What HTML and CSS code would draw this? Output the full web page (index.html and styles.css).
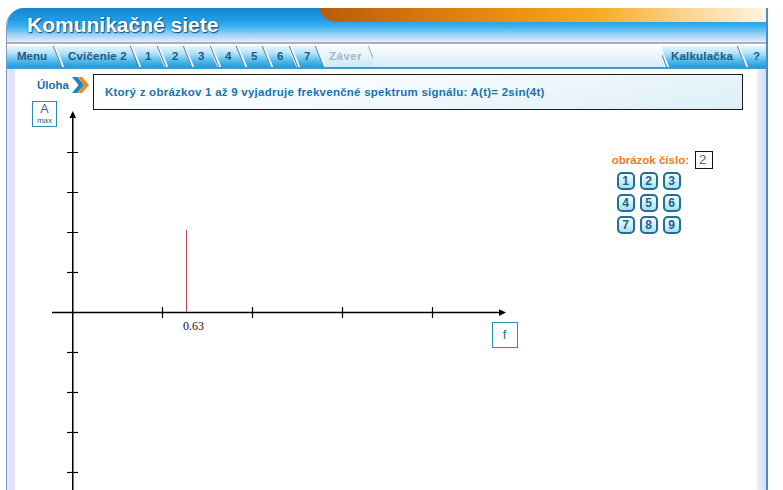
FILE: index.html
```html
<!DOCTYPE html>
<html lang="sk">
<head>
<meta charset="utf-8">
<title>Komunikačné siete</title>
<link rel="stylesheet" href="styles.css">
</head>
<body>
<div class="window">
  <header class="titlebar">
    <h1 class="title">Komunikačné siete</h1>
    <div class="accent"></div>
  </header>
  <nav class="tabbar">
    <div class="tabs">
      <a class="tab tab-first"><span>Menu</span></a>
      <a class="tab tab-wide"><span>Cvičenie 2</span></a>
      <a class="tab"><span>1</span></a>
      <a class="tab"><span>2</span></a>
      <a class="tab"><span>3</span></a>
      <a class="tab"><span>4</span></a>
      <a class="tab"><span>5</span></a>
      <a class="tab"><span>6</span></a>
      <a class="tab"><span>7</span></a>
      <a class="tab tab-off"><span>Záver</span></a>
    </div>
    <div class="tabs">
      <a class="tab tab-calc"><span>Kalkulačka</span></a>
      <a class="tab tab-last"><span>?</span></a>
    </div>
  </nav>
  <div class="body">
    <div class="side-l"></div>
    <main class="main">
      <svg class="chart" viewBox="15 69 742 421" width="742" height="421">
        <g class="axis">
          <line x1="72.75" y1="116" x2="72.75" y2="492" stroke-width="1.5"/>
          <polygon points="72.75,111 69.5,118 76,118" class="head"/>
          <line x1="52" y1="312.6" x2="500" y2="312.6" stroke-width="1.5"/>
          <polygon points="506,312.6 499,309.3 499,316" class="head"/>
          <g stroke-width="1.2">
            <line x1="67" y1="152.5" x2="78" y2="152.5"/>
            <line x1="67" y1="192.5" x2="78" y2="192.5"/>
            <line x1="67" y1="232.5" x2="78" y2="232.5"/>
            <line x1="67" y1="272.5" x2="78" y2="272.5"/>
            <line x1="67" y1="352.5" x2="78" y2="352.5"/>
            <line x1="67" y1="392.5" x2="78" y2="392.5"/>
            <line x1="67" y1="432.5" x2="78" y2="432.5"/>
            <line x1="67" y1="472.5" x2="78" y2="472.5"/>
            <line x1="162.5" y1="307" x2="162.5" y2="318"/>
            <line x1="252.5" y1="307" x2="252.5" y2="318"/>
            <line x1="342.5" y1="307" x2="342.5" y2="318"/>
            <line x1="432.5" y1="307" x2="432.5" y2="318"/>
          </g>
        </g>
        <line x1="186.5" y1="230" x2="186.5" y2="312" class="spike"/>
        <text x="183" y="329.5" class="tick-label">0.63</text>
        <rect x="32.5" y="101.5" width="24" height="25" class="axis-box"/>
        <text x="44.5" y="113" class="axis-name axis-a" text-anchor="middle">A</text>
        <text x="44.5" y="123" class="axis-sub" text-anchor="middle">max</text>
        <rect x="492.5" y="322.5" width="25" height="25" class="axis-box"/>
        <text x="504.5" y="338.5" class="axis-name" text-anchor="middle">f</text>
      </svg>
      <section class="task">
        <div class="task-label">
          <span>Úloha</span>
          <svg class="chevrons" viewBox="0 0 17 16" width="17" height="16">
            <polygon points="6,0 10,0 17,8 10,16 6,16 12,8" fill="#f0881e"/>
            <polygon points="0,0 5.5,0 12,8 5.5,16 0,16 6.5,8" fill="#2a7fc2"/>
          </svg>
        </div>
        <div class="question">Ktorý z obrázkov 1 až 9 vyjadruje frekvenčné spektrum signálu: A(t)= 2sin(4t)</div>
      </section>
      <section class="picker">
        <div class="picker-row">
          <span class="picker-label">obrázok číslo:</span>
          <span class="picker-input">2</span>
        </div>
        <div class="picker-grid">
          <a class="pick"><span>1</span></a>
          <a class="pick"><span>2</span></a>
          <a class="pick"><span>3</span></a>
          <a class="pick"><span>4</span></a>
          <a class="pick"><span>5</span></a>
          <a class="pick"><span>6</span></a>
          <a class="pick"><span>7</span></a>
          <a class="pick"><span>8</span></a>
          <a class="pick"><span>9</span></a>
        </div>
      </section>
    </main>
    <div class="side-r"></div>
  </div>
</div>
</body>
</html>
```

FILE: styles.css
```css
* { box-sizing: border-box; }

html, body {
  margin: 0;
  padding: 0;
  background: #ffffff;
  font-family: "Liberation Sans", Arial, sans-serif;
}

.window {
  margin: 8px 0 0 6px;
  width: 762px;
  height: 482px;
  display: flex;
  flex-direction: column;
  overflow: hidden;
  border-left: 1px solid #7f9cbf;
  border-right: 2px solid #4a8cc6;
  border-top-left-radius: 18px;
}

/* ---------- title bar ---------- */
.titlebar {
  position: relative;
  height: 36px;
  flex: none;
  background: linear-gradient(#1585d1 0%, #1f9de5 35%, #3fb1ee 55%, #a2d4f5 80%, #e6ecfa 100%);
  border-bottom: 2px solid #a9afbe;
}

.title {
  margin: 0;
  padding-left: 20px;
  line-height: 34px;
  font-size: 21px;
  font-weight: bold;
  color: #ffffff;
  text-shadow: 1px 1px 1px #0c4f88, 0 0 2px #1b64a0;
  position: relative;
  z-index: 1;
}

.accent {
  position: absolute;
  top: 0;
  right: 0;
  left: 313px;
  height: 14px;
  border-bottom-left-radius: 18px 14px;
  background: linear-gradient(90deg, #b85c0c 0%, #d2700e 18%, #ee9212 45%, #f8aa24 62%, #fbd48e 82%, #fff4e4 100%);
}

/* ---------- tab bar ---------- */
.tabbar {
  flex: none;
  height: 25px;
  padding-top: 2px;
  display: flex;
  justify-content: space-between;
  background: linear-gradient(#ffffff 0%, #f2f9fd 30%, #d4ecf9 100%);
  border-bottom: 2px solid #3b99d3;
}

.tabs {
  display: flex;
  height: 21px;
  overflow: hidden;
}

.tab {
  display: block;
  height: 21px;
  padding: 0 9.5px;
  transform: skewX(22deg);
  background: linear-gradient(#e6f6fd 0%, #b4e2f7 35%, #54bbec 70%, #1f9cdb 100%);
  border-left: 1px solid #5b7895;
  box-shadow: inset 2px 0 0 #eef8fd;
  color: #1d5a88;
  font-size: 11.5px;
  font-weight: bold;
  line-height: 21px;
  text-decoration: none;
}

.tab span {
  display: block;
  transform: skewX(-22deg);
}

.tab-first {
  margin-left: -6px;
  padding-left: 16px;
  border-left: none;
  box-shadow: none;
}

.tab-wide {
  padding: 0 8px 0 10px;
  letter-spacing: 0.2px;
}

.tab-off {
  background: linear-gradient(#f4fafd 0%, #e4f3fb 50%, #cbe7f6 100%);
  color: #a8b6c2;
  border-right: 1px solid #8fa9c0;
  padding: 0 10px 0 9px;
  letter-spacing: 0.5px;
}

.tab-calc {
  padding: 0 8px;
  letter-spacing: 0.2px;
}

.tab-last {
  margin-right: -6px;
  padding: 0 12px 0 11px;
}

/* ---------- body ---------- */
.body {
  flex: 1;
  display: flex;
  min-height: 0;
}

.side-l {
  width: 8px;
  flex: none;
  background: #dfe4f6;
}

.side-r {
  width: 9px;
  flex: none;
  background: linear-gradient(90deg, #eef1fa, #d6ddf2);
}

.main {
  position: relative;
  flex: 1;
  display: flex;
  flex-direction: column;
  background: #ffffff;
}

.chart {
  position: absolute;
  top: 0;
  left: 0;
}

.axis line { stroke: #000000; }
.head { fill: #000000; }
.spike { stroke: #c7474d; stroke-width: 1; }
.tick-label {
  font-family: "Liberation Serif", "Times New Roman", serif;
  font-size: 12px;
  fill: #111111;
}
.axis-box { fill: #ffffff; stroke: #2e8db5; stroke-width: 1; }
.axis-name {
  font-family: "Liberation Sans", Arial, sans-serif;
  font-size: 13px;
  fill: #1a6a94;
}
.axis-a { font-size: 12.5px; }
.axis-sub {
  font-family: "Liberation Sans", Arial, sans-serif;
  font-size: 8px;
  fill: #1a6a94;
}

/* ---------- task ---------- */
.task {
  position: relative;
  display: flex;
  align-items: flex-start;
  margin-top: 5px;
  padding: 0 14px 0 22px;
}

.task-label {
  display: flex;
  align-items: center;
  gap: 3px;
  margin-top: 3px;
  color: #1c6ea4;
  font-size: 11.5px;
  font-weight: bold;
}

.chevrons { display: block; }

.question {
  flex: 1;
  margin-left: 4px;
  height: 36px;
  padding-left: 11px;
  border: 1px solid #1a1a1a;
  background: linear-gradient(170deg, #ffffff 0%, #f6fbfe 40%, #ddeff8 100%);
  color: #1b72a6;
  font-size: 11.5px;
  font-weight: bold;
  line-height: 34px;
  letter-spacing: 0.25px;
  white-space: nowrap;
}

/* ---------- picker ---------- */
.picker {
  position: relative;
  align-self: flex-end;
  margin: 41px 44px 0 0;
  display: flex;
  flex-direction: column;
}

.picker-row {
  display: flex;
  align-items: center;
  gap: 6px;
}

.picker-label {
  color: #f07a1e;
  font-size: 11.5px;
  font-weight: bold;
}

.picker-input {
  width: 18px;
  height: 18px;
  border: 1px solid #111111;
  background: #ffffff;
  padding-left: 3px;
  color: #1a6fa5;
  font-size: 13px;
  line-height: 16px;
}

.picker-grid {
  margin: 3px 0 0 5px;
  display: grid;
  grid-template-columns: repeat(3, 18px);
  column-gap: 5px;
  row-gap: 4px;
}

.pick {
  width: 18px;
  height: 18px;
  border: 2px solid #22708f;
  border-radius: 5px;
  background: linear-gradient(#f2fbff 0%, #cdeefa 55%, #a9def3 100%);
  color: #1b6388;
  font-size: 12px;
  font-weight: bold;
  line-height: 14px;
  text-align: center;
  text-decoration: none;
}
```
